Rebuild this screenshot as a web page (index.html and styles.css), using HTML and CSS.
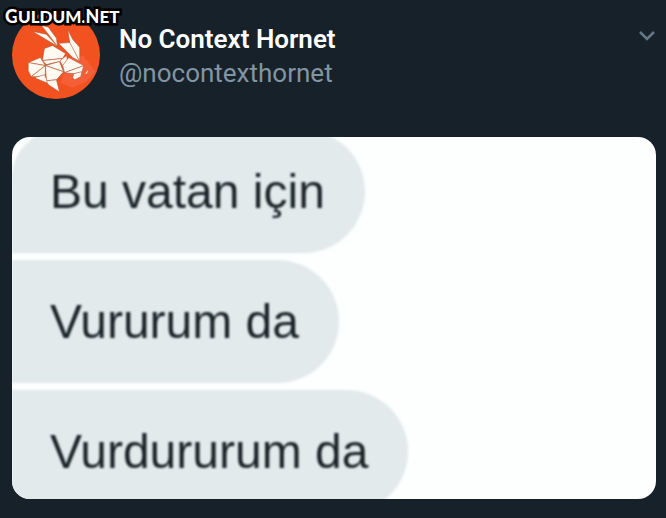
FILE: index.html
```html
<!DOCTYPE html>
<html lang="tr">
<head>
<meta charset="utf-8">
<title>No Context Hornet</title>
<link rel="stylesheet" href="styles.css">
</head>
<body>
<article class="post">
  <header class="head">
    <svg class="avatar" viewBox="0 0 87 87" aria-hidden="true">
      <circle cx="43.5" cy="43.5" r="43.5" fill="#f2521f"/>
      <path d="M57 46 70 44 83 60 73 70 60 76 48 71z" fill="#f45f38"/>
      <g fill="#fffaf2" stroke="#b5522f" stroke-width=".6" stroke-linejoin="round">
        <path d="M20 20 34 23 45 35z"/>
        <path d="M29 14 36 16 44 27 45 35z"/>
        <path d="M46 32 59 31 67 50 60 46z"/>
        <path d="M55 18 60 28 67 36 67 50 57 31z"/>
        <path d="M32 37 40 34 53 42 50 47 30 49z"/>
        <path d="M50 47 54 44 55 50 50 54 47 49z"/>
        <path d="M30 49 50 47 47 50 34 53z"/>
        <path d="M16 51 28 46 33 54z"/>
        <path d="M16 51 33 54 19 65 16 59z"/>
        <path d="M33 54 33 65 19 65z"/>
        <path d="M33 54 47 50 51 60z"/>
        <path d="M33 54 51 60 44 68 34 69z"/>
        <path d="M22 66 32 63 37 73 34 71z"/>
        <path d="M34 69 44 68 47 80 36 73z"/>
        <path d="M50 54 56 46 71 54 52 61z"/>
        <path d="M52 61 71 54 69 61 61 62z"/>
        <path d="M60 66 61 62 69 60 68 65 62 68z"/>
      </g>
      <path d="m73 62 2-3" stroke="#fffaf2"/>
    </svg>
    <div class="who">
      <h1 class="name">No Context Hornet</h1>
      <a class="handle" href="#">@nocontexthornet</a>
    </div>
    <button class="more" type="button" aria-label="Menu">
      <svg viewBox="0 0 18 12" width="18" height="12"><path d="m2 2 7 7 7-7" fill="none" stroke="#657786" stroke-width="2.6"/></svg>
    </button>
    <div class="mark"><span class="big">G</span>uldum.<span class="big">N</span>et</div>
  </header>
  <section class="media">
    <p class="bubble first">Bu vatan için</p>
    <p class="bubble">Vururum da</p>
    <p class="bubble">Vurdururum da</p>
  </section>
</article>
</body>
</html>
```
FILE: styles.css
```css
* { box-sizing: border-box; }
body {
  margin: 0;
  background: #17212a;
  font-family: Roboto, "Liberation Sans", sans-serif;
}
.post { padding: 11px 10px 19px 12px; }
.head {
  position: relative;
  display: flex;
  align-items: flex-start;
  gap: 19px;
}
.avatar { width: 88px; height: 88px; flex: none; }
.who {
  flex: 1;
  display: flex;
  flex-direction: column;
  padding-top: 11px;
}
.name {
  margin: 0;
  color: #fff;
  font-size: 26px;
  line-height: 34px;
  font-weight: 600;
}
.handle {
  color: #8295a3;
  font-size: 26px;
  line-height: 34px;
  text-decoration: none;
}
.more {
  display: flex;
  margin: 19px 0 0;
  padding: 0;
  border: 0;
  background: none;
}
.mark {
  position: absolute;
  left: -7px;
  top: -6px;
  color: #fff;
  font: 900 17px/22px Lato, sans-serif;
  text-transform: uppercase;
  -webkit-text-stroke: 5px #000;
  paint-order: stroke fill;
}
.big { font-size: 18px; }
.media {
  display: flex;
  flex-direction: column;
  align-items: flex-start;
  gap: 7px;
  height: 362px;
  margin-top: 38px;
  overflow: hidden;
  border-radius: 18px;
  background: #fdfefe;
}
.bubble {
  flex: none;
  margin: 0;
  padding: 0 40px 0 38px;
  border-radius: 0 62px 62px 0;
  background: #e2eaeb;
  color: #1a2428;
  font: 48px/123px "Liberation Sans", Arial, sans-serif;
  filter: blur(.8px);
}
.first {
  margin-top: -7px;
  border-top-left-radius: 48px;
}
```
